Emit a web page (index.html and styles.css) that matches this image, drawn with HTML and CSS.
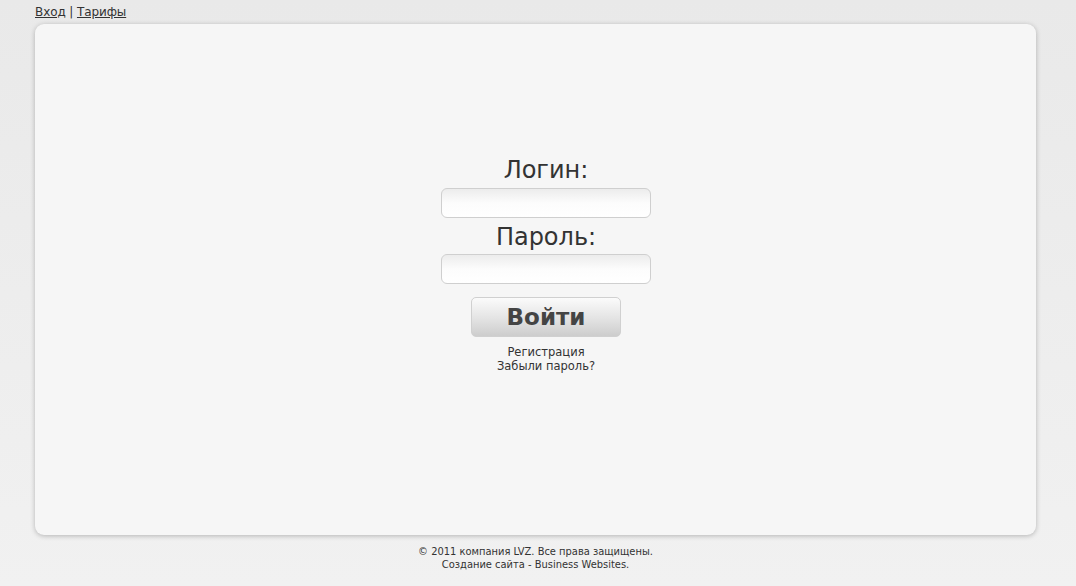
FILE: index.html
```html
<!DOCTYPE html>
<html lang="ru">
<head>
<meta charset="utf-8">
<title>Вход</title>
<link rel="stylesheet" href="styles.css">
</head>
<body>
<div class="page">
  <div class="topnav"><a href="#">Вход</a> | <a href="#">Тарифы</a></div>
  <div class="card">
    <form class="login">
      <label class="lbl">Логин:</label>
      <input class="field" type="text">
      <label class="lbl">Пароль:</label>
      <input class="field" type="password">
      <button class="btn" type="button">Войти</button>
      <div class="links">
        <a href="#">Регистрация</a>
        <a href="#">Забыли пароль?</a>
      </div>
    </form>
  </div>
  <div class="footer">
    <div>© 2011 компания LVZ. Все права защищены.</div>
    <div>Создание сайта - Business Websites.</div>
  </div>
</div>
</body>
</html>
```
FILE: styles.css
```css
html, body { margin: 0; padding: 0; height: 100%; }
body {
  background: linear-gradient(#e9e9e9, #f1f1f1);
  font-family: "DejaVu Sans", Verdana, sans-serif;
  color: #333;
}
.page {
  width: 1001px;
  margin-left: 35px;
  display: flex;
  flex-direction: column;
}
.topnav {
  font-size: 12px;
  line-height: 16px;
  padding-top: 4px;
  height: 20px;
  color: #333;
  letter-spacing: -0.1px;
}
.topnav a { color: #333; text-decoration: underline; }
.card {
  height: 511px;
  box-sizing: border-box;
  background: #f6f6f6;
  border-radius: 9px;
  box-shadow: 0 1px 5px rgba(0,0,0,0.25);
  display: flex;
  justify-content: center;
  padding-left: 21px;
}
.login {
  margin-top: 131px;
  width: 210px;
  display: flex;
  flex-direction: column;
  align-items: center;
}
.lbl {
  font-size: 24px;
  line-height: 30px;
  color: #333;
  height: 32px;
}
.lbl:first-child { height: 33px; }
.field {
  width: 210px;
  height: 30px;
  box-sizing: border-box;
  border: 1px solid #cfcfcf;
  border-radius: 6px;
  background: linear-gradient(#ececec, #fcfcfc 50%, #ffffff);
  margin: 0 0 4px 0;
  padding: 0 6px;
}
.btn {
  margin-top: 9px;
  width: 150px;
  height: 40px;
  border: 1px solid #d0d0d0;
  border-radius: 5px;
  background: linear-gradient(#fbfbfb, #e3e3e3 55%, #cdcdcd);
  font-family: "DejaVu Sans", Verdana, sans-serif;
  font-weight: bold;
  font-size: 23px;
  color: #444;
  padding: 0;
}
.links {
  margin-top: 8px;
  display: flex;
  flex-direction: column;
  align-items: center;
  font-size: 11.5px;
  line-height: 14px;
}
.links a { color: #333; text-decoration: none; }
.footer {
  margin-top: 10px;
  text-align: center;
  font-size: 11px;
  line-height: 13px;
  color: #333;
  font-family: "DejaVu Sans Condensed", Tahoma, sans-serif;
}
```
